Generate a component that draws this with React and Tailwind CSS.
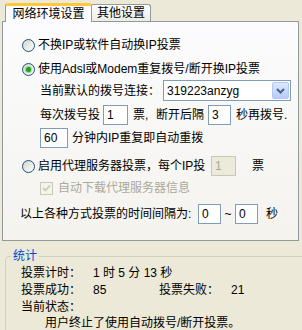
import React from 'react';

const font = { fontFamily: '"Liberation Sans", "Noto Sans CJK SC", sans-serif' };

const Radio = ({ checked }) => (
  <span className="w-[13px] h-[13px] shrink-0 rounded-full border border-[#1c5180] bg-gradient-to-br from-[#d4d4cc] to-white flex items-center justify-center">
    {checked && <span className="w-[5px] h-[5px] rounded-full bg-[#21a121] shadow-[0_0_1px_1px_#8ed88e]" />}
  </span>
);

const Field = ({ w, value, disabled }) => (
  <span
    className={`h-[20px] ${w} shrink-0 border flex items-center pl-[3px] text-[12px] ${
      disabled ? 'border-[#c9c7ba] bg-[#ebeadb] text-[#aca899]' : 'border-[#7f9db9] bg-white text-black'
    }`}
  >
    {value}
  </span>
);

export default function App() {
  return (
    <div className="w-[302px] h-[330px] bg-[#ece9d8] text-[12px] text-black leading-none overflow-hidden" style={font}>
      {/* tabs */}
      <div className="flex items-end h-[21px] pl-[5px] relative z-10">
        <div className="w-[87px] h-[19px] -mb-px bg-[#fcfcfe] border-x border-[#919b9c] border-t-[3px] border-t-[#ffc83c] rounded-t-[3px] flex items-center justify-center">
          网络环境设置
        </div>
        <div className="w-[59px] h-[17px] bg-gradient-to-b from-white to-[#ecebe6] border-t border-r border-[#919b9c] rounded-tr-[3px] flex items-center justify-center">
          其他设置
        </div>
      </div>

      {/* tab page */}
      <div className="ml-[2px] w-[297px] h-[220px] border border-[#919b9c] bg-gradient-to-b from-[#fcfcfe] to-[#f4f3ee] pt-[13px]">
        <div className="flex items-center h-[20px] pl-[19px] gap-[3px]">
          <Radio />
          <span>不换IP或软件自动换IP投票</span>
        </div>
        <div className="flex items-center h-[20px] mt-[4px] pl-[19px] gap-[3px]">
          <Radio checked />
          <span>使用Adsl或Modem重复拨号/断开换IP投票</span>
        </div>
        <div className="flex items-center h-[21px] mt-[1px] pl-[37px]">
          <span className="w-[123px]">当前默认的拨号连接：</span>
          <div className="w-[128px] h-[21px] border border-[#7f9db9] bg-white flex items-center justify-between pl-[3px] pr-px">
            <span>319223anzyg</span>
            <span className="w-[17px] h-[17px] rounded-[2px] border border-[#b4c8f6] bg-gradient-to-b from-[#dde8fe] to-[#b6cbf7] flex items-center justify-center">
              <svg width="9" height="6" viewBox="0 0 9 6">
                <path d="M1 1 L4.5 4.5 L8 1" stroke="#4d6185" strokeWidth="2" fill="none" />
              </svg>
            </span>
          </div>
        </div>
        <div className="flex items-center h-[21px] mt-[3px] pl-[37px]">
          <span className="w-[63px]">每次拨号投</span>
          <Field w="w-[25px]" value="1" />
          <span className="ml-[5px] w-[23px]">票,</span>
          <span className="w-[52px]">断开后隔</span>
          <Field w="w-[23px]" value="3" />
          <span className="ml-[5px]">秒再拨号.</span>
        </div>
        <div className="flex items-center h-[21px] mt-[2px] pl-[37px]">
          <Field w="w-[28px]" value="60" />
          <span className="ml-[4px]">分钟内IP重复即自动重拨</span>
        </div>
        <div className="flex items-center h-[20px] mt-[8px] pl-[19px]">
          <Radio />
          <span className="ml-[3px] w-[173px]">启用代理服务器投票，每个IP投</span>
          <Field w="w-[25px]" value="1" disabled />
          <span className="ml-[16px]">票</span>
        </div>
        <div className="flex items-center h-[20px] mt-[2px] pl-[37px]">
          <span className="w-[13px] h-[13px] border border-[#cac8bb] bg-[#f5f4ea] flex items-center justify-center">
            <svg width="9" height="8" viewBox="0 0 9 8">
              <path d="M1 4 L3.5 6.5 L8 1.5" stroke="#cac8bb" strokeWidth="1.8" fill="none" />
            </svg>
          </span>
          <span className="ml-[5px] text-[#aca899]">自动下载代理服务器信息</span>
        </div>
        <div className="flex items-center h-[21px] mt-[5px] pl-[17px]">
          <span className="w-[178px]">以上各种方式投票的时间间隔为:</span>
          <Field w="w-[23px]" value="0" />
          <span className="w-[14px] text-center">~</span>
          <Field w="w-[23px]" value="0" />
          <span className="ml-[8px]">秒</span>
        </div>
      </div>

      {/* stats group */}
      <div className="relative mt-[15px] ml-[5px] h-[80px] border-l border-t border-[#d0d0bf] rounded-tl-[5px]">
        <span className="absolute -top-[7px] left-[5px] px-[2px] bg-[#ece9d8] text-[#0046d5]">统计</span>
        <div className="pl-[15px] pt-[8px]">
          <div className="flex items-center h-[16px]">
            <span className="w-[72px]">投票计时：</span>
            <span>1 时 5 分 13 秒</span>
          </div>
          <div className="flex items-center h-[16px] mt-[1px]">
            <span className="w-[72px]">投票成功：</span>
            <span className="w-[66px]">85</span>
            <span className="w-[72px]">投票失败：</span>
            <span>21</span>
          </div>
          <div className="flex items-center h-[16px] mt-[1px]">当前状态：</div>
          <div className="flex items-center h-[15px] pl-[24px]">用户终止了使用自动拨号/断开投票。</div>
        </div>
      </div>
    </div>
  );
}
